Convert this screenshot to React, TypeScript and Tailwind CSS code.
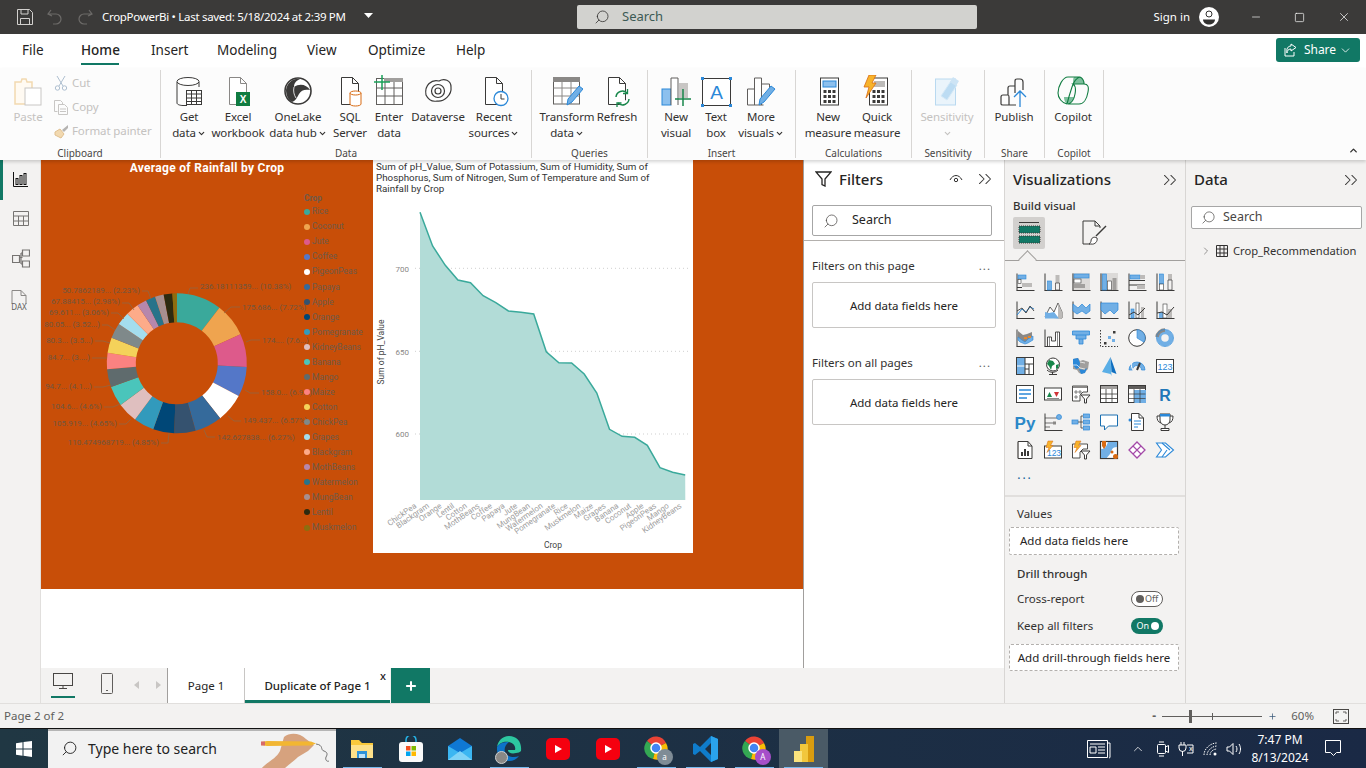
import type { ReactNode } from "react";
import { ChevronDown, ChevronsRight, ChevronRight, Search, Plus, Minus, X, Square } from "lucide-react";

const D = "#3b3a39";
const B = "#71afe5";
const BD = "#2b88d8";
const G = "#bdbbb9";

const Svg = ({ s = 32, children }: { s?: number; children: ReactNode }) => (
  <svg width={s} height={s} viewBox={`0 0 ${s} ${s}`} fill="none">
    {children}
  </svg>
);

// ribbon icons, all on a 32 box
const Doc = ({ c = "#605e5c" }: { c?: string }) => <path d="M7.5 2.5h11l6 6v21h-17z M18.5 2.5v6h6" stroke={c} fill="#fff" />;

const PasteIcon = () => (
  <Svg>
    <path d="M3 7h6l1-3h4l1 3h5v22H3z" stroke="#f2d9b0" fill="#fffaf2" strokeWidth="1.5" />
    <rect x="13" y="13" width="16" height="17" fill="#fff" stroke="#c8c6c4" />
  </Svg>
);
const GetDataIcon = () => (
  <Svg>
    <path d="M4 7v21c0 1.5 3 2.5 6 2.5h4M26 12V7" stroke={D} />
    <ellipse cx="15" cy="6.5" rx="11" ry="4" stroke={D} fill="#fff" />
    <rect x="13.5" y="15.5" width="15" height="14" fill="#fff" stroke={D} />
    <path d="M13.5 19h15M13.5 23h15M13.5 26.5h15M18.5 15.5v14M23.5 15.5v14" stroke={D} />
  </Svg>
);
const ExcelIcon = () => (
  <Svg>
    <Doc c="#8a8886" />
    <rect x="14" y="17" width="14" height="14" fill="#107c41" />
    <text x="21" y="28" fontSize="10" fontWeight="700" fill="#fff" textAnchor="middle" fontFamily="Liberation Sans">X</text>
  </Svg>
);
const OneLakeIcon = () => (
  <Svg>
    <circle cx="16" cy="16" r="13" stroke={D} strokeWidth="1.6" fill="#fff" />
    <path d="M4 15C5 8 11 3 18 4c-4 2-6 4-6 8 6-4 13-2 16 3-5-1-9 0-11 4-2 4-4 7-7 8-4-2-6-7-6-12z" fill={D} />
    <path d="M12 12c-1 4 0 8 2 11" stroke="#fff" strokeWidth=".8" />
  </Svg>
);
const SqlIcon = () => (
  <Svg>
    <Doc c="#3b3a39" />
    <path d="M16 18v11c0 1.2 2.5 2 5.5 2s5.5-.8 5.5-2V18" fill="#fff" stroke="#d86a12" />
    <ellipse cx="21.5" cy="18" rx="5.5" ry="2" fill="#fff" stroke="#d86a12" />
  </Svg>
);
const EnterIcon = () => (
  <Svg>
    <rect x="3.5" y="3.5" width="26" height="26" fill="#fff" stroke="#605e5c" />
    <rect x="11" y="3" width="19" height="4" fill="#a19f9d" />
    <path d="M3.5 13h26M3.5 21h26M12 7v22.5M21 7v22.5" stroke="#605e5c" />
    <path d="M9 0v15M1 7h16" stroke="#18a058" strokeWidth="1.5" />
  </Svg>
);
const DataverseIcon = () => (
  <Svg>
    <path d="M4 20C2 10 10 4 17 6c5-3 12-1 12 6 1 8-7 15-14 14-5 1-9-2-11-6z" stroke={D} strokeWidth="1.2" fill="#fff" />
    <circle cx="16" cy="16" r="6.5" stroke={D} strokeWidth="1.2" />
    <circle cx="16" cy="16" r="3" stroke={D} strokeWidth="1.2" />
  </Svg>
);
const RecentIcon = () => (
  <Svg>
    <Doc c="#3b3a39" />
    <circle cx="23" cy="23.5" r="7" fill="#fff" stroke="#2b88d8" strokeWidth="1.3" />
    <path d="M23 19v5h3.5" stroke={D} />
  </Svg>
);
const Pencil = ({ x = 0 }: { x?: number }) => (
  <g transform={`translate(${x} 0)`}>
    <path d="M16 30l1-6 11-13 4 3-11 13z" fill="#71afe5" stroke="#2b88d8" />
  </g>
);
const TransformIcon = () => (
  <Svg>
    <rect x="2.5" y="3" width="26" height="26" fill="#fff" stroke="#605e5c" />
    <rect x="2" y="2" width="27" height="5" fill="#8a8886" />
    <path d="M2.5 13h26M2.5 21h26M11 7v22M20 7v22" stroke="#8a8886" />
    <Pencil />
  </Svg>
);
const RefreshIcon = () => (
  <Svg>
    <Doc c="#3b3a39" />
    <path d="M15 22a6.5 6.5 0 0 1 11-4M28 24a6.5 6.5 0 0 1-11 4" stroke="#18874b" strokeWidth="1.5" fill="#fff" />
    <path d="M26.5 14v4.5H22M16 32.5V28h4.5" stroke="#18874b" strokeWidth="1.3" />
  </Svg>
);
const NewVisualIcon = () => (
  <Svg>
    <rect x="2" y="14" width="9" height="16" fill="#8cc0ee" stroke="#2b88d8" />
    <path d="M11 30V3h7v27" stroke="#605e5c" fill="#fff" />
    <rect x="19" y="8" width="9" height="15" fill="#c8c6c4" />
    <path d="M23 14v17M15 24h16" stroke="#18874b" strokeWidth="1.5" />
  </Svg>
);
const TextBoxIcon = () => (
  <Svg>
    <rect x="2.5" y="3.5" width="28" height="27" fill="#fff" stroke={D} />
    <text x="16.5" y="24" fontSize="19" fill={BD} textAnchor="middle" fontFamily="Liberation Sans">A</text>
    <path d="M1 2h3v3H1zM29 2h3v3h-3zM1 29h3v3H1zM29 29h3v3h-3z" fill={BD} />
  </Svg>
);
const MoreVisualsIcon = () => (
  <Svg>
    <path d="M2.5 30V14h7M9.5 30V3h7v27M16.5 9h8v6M2.5 30h16" stroke="#605e5c" fill="#fff" />
    <Pencil x={-2} />
  </Svg>
);
const Calc = () => (
  <>
    <rect x="8.5" y="3" width="18" height="27" fill="#fff" stroke={D} />
    {[15, 20, 25].map(y => [11.5, 16, 20.5].map(x => <rect key={`${x}${y}`} x={x} y={y} width="3" height="3" fill={D} />))}
  </>
);
const NewMeasureIcon = () => (
  <Svg>
    <Calc />
    <rect x="11" y="6" width="13" height="6" fill="#8cc0ee" stroke="#2b88d8" />
  </Svg>
);
const QuickMeasureIcon = () => (
  <Svg>
    <Calc />
    <rect x="13" y="6" width="11" height="6" fill="#bdbbb9" />
    <path d="M8 0h7l-4 8h4L5 23l3-11H3z" fill="#f7b32b" stroke="#d86a12" strokeWidth=".8" />
  </Svg>
);
const SensitivityIcon = () => (
  <Svg>
    <rect x="4.5" y="4" width="20" height="26" fill="#eaf4fb" stroke="#b9d9f0" />
    <path d="M10 21l10-15 6 4-10 15z" fill="#bcdcf3" stroke="#d5e9f7" />
    <path d="M22 2l6 4-3 5-6-4z" fill="#cde4f5" />
  </Svg>
);
const PublishIcon = () => (
  <Svg>
    <path d="M3 29v-7q0-2 2-2h5q1 0 1 2M10 20v-7q0-2 2-2h5v-5q0-2 2-2h3q3 0 3 3v8M17 11v7M3 29q0 1 2 1h13M11 22v8" stroke={D} strokeWidth="1.2" />
    <path d="M22 32V16M16 22l6-6 6 6" stroke={BD} strokeWidth="1.3" />
  </Svg>
);
const CopilotIcon = () => (
  <Svg>
    <path d="M17 2h6c2 0 4 3 4 7H16c0-3 0-6 1-7z" fill="#7cbf9c" />
    <path d="M7 22h10c-1 4-3 7-6 7-2 0-4-3-4-7z" fill="#7cbf9c" />
    <path d="M11 2h12c-4 1-6 4-8 10-2 6-4 13-5 17-5-1-9-6-9-11 0-7 5-16 10-16z" stroke="#107c41" strokeWidth="1.1" />
    <path d="M16 9h11c4 0 5 3 4 8-1 6-4 12-9 12H11c4-1 6-4 7-10 1-5 1-8-2-10z" stroke="#107c41" strokeWidth="1.1" />
    <path d="M23 2c2 1 4 3 4 7" stroke="#107c41" strokeWidth="1.1" />
  </Svg>
);

const Chev = () => <ChevronDown className="inline w-[9px] h-[9px] ml-[1px]" strokeWidth={3} />;

function RibbonBtn({ cls, icon, l1, l2, chev, muted }: { cls: string; icon: ReactNode; l1: string; l2?: string; chev?: boolean; muted?: boolean }) {
  return (
    <div className={`flex flex-col items-center shrink-0 ${cls} ${muted ? "text-[#c4c2c0]" : "text-[#323130]"}`}>
      <div className="h-[33px] w-[32px] mb-[1px]">{icon}</div>
      <div className="leading-[16px] whitespace-nowrap">{l1}</div>
      {l2 !== undefined && (
        <div className="leading-[16px] whitespace-nowrap">
          {l2}
          {chev && <Chev />}
        </div>
      )}
    </div>
  );
}

function Group({ cls, label, children }: { cls: string; label: string; children: ReactNode }) {
  return (
    <div className={`shrink-0 h-[88px] border-r border-[#d8d6d4] flex flex-col ${cls}`}>
      <div className="flex flex-1 pt-[5px]">{children}</div>
      <div className="text-center text-[10px] leading-[12px] text-[#484644] mb-[-1px] tracking-normal">{label}</div>
    </div>
  );
}

// visualizations pane glyphs on an 18 box
const Ax = () => <path d="M1 .5v17M.5 17.5h18" stroke={D} />;
const vizIcons: ReactNode[] = [
  <><Ax /><rect x="2" y="2" width="8" height="4" fill={B} stroke={BD} strokeWidth=".6" /><rect x="2" y="6.5" width="3" height="4" fill="#fff" stroke={D} strokeWidth=".6" /><rect x="6" y="10" width="10" height="4" fill={G} /><path d="M1 14.5h5" stroke={D} /></>,
  <><Ax /><rect x="3.5" y="8" width="4" height="9" fill={B} stroke={BD} strokeWidth=".6" /><rect x="11.5" y="2" width="4" height="8" fill={G} /><path d="M11.5 10h4v7h-4z" stroke={D} strokeWidth=".7" /></>,
  <><rect width="18" height="18" fill="#dcdad8" /><Ax /><rect x="2" y="1" width="15" height="4" fill={B} stroke={BD} strokeWidth=".6" /><rect x="2" y="6" width="7" height="4" fill="#fff" stroke={D} strokeWidth=".6" /><rect x="2" y="11" width="11" height="4" fill="#a19f9d" /></>,
  <><rect width="18" height="18" fill="#dcdad8" /><Ax /><rect x="2.5" y="1" width="4" height="16" fill={B} stroke={BD} strokeWidth=".6" /><rect x="7.5" y="8" width="4" height="9" fill="#fff" stroke={D} strokeWidth=".6" /><rect x="12.5" y="5" width="4" height="12" fill="#a19f9d" /></>,
  <><Ax /><rect x="2" y="2" width="10" height="4" fill={B} stroke={BD} strokeWidth=".6" /><rect x="12" y="2" width="5" height="4" fill={G} /><path d="M1 7.5h16M1 12h16" stroke={D} /><rect x="9" y="12" width="8" height="4" fill={G} /></>,
  <><Ax /><rect x="3.5" y="1" width="4" height="10" fill={B} stroke={BD} strokeWidth=".6" /><rect x="3.5" y="11" width="4" height="6" fill="#fff" stroke={D} strokeWidth=".6" /><rect x="12" y="1" width="4" height="6" fill={G} /><path d="M12 7h4v10h-4z" stroke={D} strokeWidth=".7" /></>,
  <><Ax /><path d="M1 14l5-6 4 3 4-5 4 2" stroke={BD} /><path d="M1 10l5-3 4 5 4-7 4 5" stroke={D} strokeWidth=".9" /></>,
  <><path d="M1 16l5-10 4 5 4-9 4 9v6z" fill="#fff" stroke={D} strokeWidth=".8" /><path d="M14 2l4 9v6h-4z" fill={G} /><path d="M1 11l4 1 5-1 5 6.5H1z" fill={B} /></>,
  <><Ax /><path d="M1 3l5 4 4-4 4 4 4-4v7l-4 3-4-3-5 3-4-3z" fill={B} stroke={BD} strokeWidth=".7" /></>,
  <><Ax /><path d="M1 2h17v7l-4 4-4-4-5 4-4-4z" fill={B} stroke={BD} strokeWidth=".7" /></>,
  <><Ax /><rect x="3" y="8" width="3" height="9" fill={B} stroke={BD} strokeWidth=".6" /><rect x="8" y="2" width="3" height="15" fill="#fff" stroke={D} strokeWidth=".6" /><rect x="13" y="6" width="3" height="11" fill={G} /><path d="M1 14l5-3 4 3 7-7" stroke={D} /></>,
  <><Ax /><rect x="3" y="11" width="4" height="6" fill={B} /><rect x="7" y="3" width="4" height="14" fill="#fff" stroke={D} strokeWidth=".6" /><rect x="12" y="8" width="4" height="9" fill={G} /><path d="M1 12l5-1 5 3 7-8" stroke={D} /></>,
  <><Ax /><path d="M2 2l5 4 4-1 5-2v5l-4 3-3 3-3-1-4-3z" fill="#8a8886" /><path d="M2 8l4 3 3 2 3-3 5-3v4l-5 3-3 1-5-2-2-2z" fill={B} stroke={BD} strokeWidth=".6" /><rect x="8" y="8" width="3" height="2" fill="#e8872c" /><rect x="12" y="7" width="3" height="2" fill="#e8872c" /></>,
  <><Ax /><path d="M3.5 17V8h4v4h4V3h4v14" stroke={D} strokeWidth=".9" fill="#fff" /><path d="M5.5 8v9M13.5 3v14" stroke={D} strokeWidth=".6" /></>,
  <><path d="M.5 2h17v4h-3.5v4h-3v5h-4v-5h-3V6H.5z" fill={B} stroke={BD} strokeWidth=".8" /><path d="M4 6h10M7 10h4" stroke={BD} strokeWidth=".8" /></>,
  <><path d="M.5 1v16.5H18" stroke={D} strokeDasharray="1.5 1.5" /><rect x="4" y="13" width="2.5" height="2.5" fill={D} /><rect x="8" y="7" width="3" height="3" fill={B} /><rect x="12" y="10" width="3" height="3" fill={B} /><rect x="13" y="2" width="2.5" height="2.5" fill={D} /></>,
  <><circle cx="9" cy="9" r="8.3" fill="#fff" stroke={D} /><path d="M9 9V.7a8.3 8.3 0 0 1 7 12.5z" fill={B} stroke={BD} strokeWidth=".6" /></>,
  <><circle cx="9" cy="9" r="6" stroke={B} strokeWidth="4.5" /><path d="M9 1a8 8 0 0 0-8 7" stroke="#8a8886" strokeWidth="3.5" /><circle cx="9" cy="9" r="8.5" stroke={BD} strokeWidth=".7" /></>,
  <><rect x=".5" y=".5" width="17" height="17" fill="#fff" stroke={D} /><rect x="1" y="1" width="8" height="16" fill={B} /><path d="M1 9h8" stroke="#fff" /><path d="M9 1v16M9 7h8M13 7v10M9 12h4" stroke={D} /></>,
  <><circle cx="9" cy="7.5" r="6.5" fill="#fff" stroke={D} /><path d="M5 3l4 1 2 3-3 2-1 4-2-4-2-2zM12 8l3-1-1 4-2 1z" fill="#18874b" /><path d="M3 13c3 3 8 3 11 0M8.5 15v2.5M5 17.5h8" stroke={D} /></>,
  <><path d="M1 2l5-1 2 3 3-1 6 2-1 7-3 3-3 2-3-1-2-3-4-1z" fill="#a19f9d" /><path d="M1 2l5-1 2 5-1 5-3 1-3-4z" fill={BD} /><path d="M7 12l5 1 3-2-2 5-4 1z" fill={BD} /><path d="M1 8h4l3 3 5 1M8 5l5 1" stroke="#fff" strokeWidth=".7" /></>,
  <><path d="M10.5 0L2 15l8.5 2 1 2z" fill="#5aaee6" /><path d="M10.5 0l6 17-5-2z" fill="#0f6fc0" /></>,
  <><path d="M1 13a8 8 0 0 1 16 0h-3.5a4.5 4.5 0 0 0-9 0z" fill={B} stroke={BD} strokeWidth=".7" /><path d="M5 13C3 10 3 7 4 6" stroke="#fff" /><path d="M9 13l3-7" stroke={D} strokeWidth="2" /></>,
  <><rect x=".5" y="2.5" width="17" height="13" fill="#fff" stroke={D} /><text x="9" y="12.5" fontSize="9" textAnchor="middle" fill={BD} fontFamily="Liberation Sans">123</text></>,
  <><rect x=".5" y=".5" width="17" height="17" fill="#fff" stroke={D} /><path d="M3 5h12M3 9h12M3 13h8" stroke={BD} strokeWidth="1.5" /></>,
  <><rect x=".5" y="3" width="17" height="12" fill="#fff" stroke={D} /><path d="M3 12l2.5-5L8 12z" fill="#18874b" /><path d="M10 7h5l-2.5 5z" fill="#d13438" /><path d="M3 13.5h12" stroke={D} strokeWidth=".6" /></>,
  <><path d="M.5 1h15v6H11l-3 3v6H.5z" fill="#fff" stroke={D} strokeWidth=".9" /><rect x="1" y="1" width="14" height="2" fill="#8a8886" /><path d="M3 6h2v2H3zM3 11h2v2H3zM7 6h2v2H7z" stroke={D} strokeWidth=".6" /><path d="M9 10h9l-3.5 4v4h-2v-4z" fill="#fff" stroke={D} /></>,
  <><rect x=".5" y=".5" width="17" height="17" fill="#fff" stroke={D} /><rect x="1" y="1" width="16" height="3" fill="#a19f9d" /><path d="M.5 9h17M.5 13.5h17M6 4v14M12 4v14" stroke={D} strokeWidth=".8" /></>,
  <><rect x=".5" y=".5" width="17" height="17" fill="#fff" stroke={D} /><rect x="1" y="1" width="16" height="3" fill="#605e5c" /><rect x="6" y="5" width="12" height="13" fill={B} /><path d="M.5 9h17M.5 13.5h17M6 4v14M12 4v14" stroke={D} strokeWidth=".7" /></>,
  <text x="9" y="16" fontSize="16" fontWeight="700" textAnchor="middle" fill="#2177b8" fontFamily="Liberation Sans">R</text>,
  <text x="9" y="16" fontSize="17" fontWeight="700" textAnchor="middle" fill="#2b88c8" fontFamily="Liberation Sans">Py</text>,
  <><Ax /><path d="M1 5h13M1 10h8M1 14h5" stroke={D} strokeWidth=".7" /><circle cx="15" cy="4" r="2.5" fill={B} stroke={BD} strokeWidth=".7" /><rect x="9" y="8.5" width="3" height="3" fill="#8a8886" /></>,
  <><rect x="0" y="7" width="6" height="4" fill={B} stroke={BD} strokeWidth=".7" /><path d="M6 9h3M9 3v12M9 3h2M9 9h2M9 15h2" stroke={D} strokeWidth=".8" /><rect x="11.5" y="1" width="6" height="4" fill={B} stroke={BD} strokeWidth=".7" /><rect x="11.5" y="7" width="6" height="4" fill={B} stroke={BD} strokeWidth=".7" /><rect x="11.5" y="13" width="6" height="4" fill={B} stroke={BD} strokeWidth=".7" /></>,
  <path d="M.5 2h17v11h-9L4.5 17v-4H.5z" fill="#fff" stroke="#1a6fb0" />,
  <><path d="M3.5.5H11L15.5 5v12.5h-12z" fill="#fff" stroke={D} /><path d="M11 .5V5h4.5" stroke={D} /><circle cx="2" cy="7" r="1.5" fill={BD} /><path d="M6 8h7M6 11h7M6 14h4" stroke={BD} /></>,
  <><path d="M4 1h10v6a5 5 0 0 1-10 0zM4 3H1c0 4 1 6 4 7M14 3h3c0 4-1 6-4 7M9 12v3M5 17.5h8v-2H5z" stroke={D} fill="#fff" /><rect x="4" y="1" width="10" height="2.5" fill={BD} /></>,
  <><path d="M2 .5h10L16 5v12.5H2z" fill="#fff" stroke={D} /><path d="M12 .5V5h4" stroke={D} /><rect x="1" y="1" width="2" height="16" fill="#8a8886" /><rect x="5" y="11" width="2" height="4" fill={D} /><rect x="8" y="8" width="2" height="7" fill={D} /><rect x="11" y="10" width="2" height="5" fill={D} /></>,
  <><rect x=".5" y="5" width="17" height="12" fill="#fff" stroke={D} /><text x="10" y="15" fontSize="8.5" textAnchor="middle" fill={BD} fontFamily="Liberation Sans">123</text><path d="M4 0h5L6.5 4.5H9l-6 7 2-5H2z" fill="#f7b32b" stroke="#d86a12" strokeWidth=".5" /></>,
  <><path d="M.5 3h15v5H11l-3 3v6H.5z" fill="#fff" stroke={D} strokeWidth=".9" /><path d="M9 10h9l-3.5 4v4h-2v-4z" fill="#fff" stroke={D} /><path d="M4 0h5L6.5 4.5H9l-6 7 2-5H2z" fill="#f7b32b" stroke="#d86a12" strokeWidth=".5" /></>,
  <><rect x=".5" y=".5" width="17" height="17" fill="#fff" stroke={D} strokeWidth="1.2" /><path d="M1 8c4 0 5-2 7-7h9v5c-5 0-5 3-6 5-1 3-4 5-4 6H1z" fill={B} /><path d="M2 0h4v5l-2 3-2-3z" fill="#d86a12" /><circle cx="15.5" cy="15.5" r="2.5" fill="#d86a12" /><circle cx="12" cy="11" r="1.5" fill="#d86a12" /></>,
  <><path d="M9 1l8 8-8 8-8-8z" fill="#fff" stroke="#a44aa8" strokeWidth="1.3" /><path d="M5 5l8 8M13 5l-8 8" stroke="#a44aa8" strokeWidth="1.1" /></>,
  <><path d="M.5 2h9l8 7-8 7h-9l5-7z" fill="#fff" stroke={BD} strokeWidth="1.1" /><path d="M6 2l8 7M11 9l-5 7" stroke={BD} strokeWidth="1.1" /></>,
];

const crops: [string, number, string][] = [
  ["Rice", 10.38, "#3aa99b"], ["Coconut", 7.72, "#efa44f"], ["Jute", 7.6, "#dd5a8b"], ["Coffee", 6.9, "#5477c8"],
  ["PigeonPeas", 6.57, "#ffffff"], ["Papaya", 6.27, "#356a9b"], ["Apple", 4.9, "#35526f"], ["Orange", 4.85, "#004777"],
  ["Pomegranate", 4.7, "#329abc"], ["KidneyBeans", 4.65, "#dfbfbf"], ["Banana", 4.6, "#4ac5bb"], ["Mango", 4.16, "#5f6b6d"],
  ["Maize", 3.72, "#fb8281"], ["Cotton", 3.5, "#f4d25a"], ["ChickPea", 3.52, "#7f898a"], ["Grapes", 3.06, "#a4ddee"],
  ["Blackgram", 2.98, "#fdab89"], ["MothBeans", 2.23, "#b687ac"], ["Watermelon", 2.2, "#28738a"], ["MungBean", 2, "#a78f8f"],
  ["Lentil", 2, "#2d2a10"], ["Muskmelon", 1, "#8c6e10"],
];

// page coordinates, the svg viewBox starts at the canvas corner
const donutLabels: [string, number, number, "start" | "end", string][] = [
  ["236.18111359... (10.38%)", 200, 289, "start", "M188 294l2-6h8"],
  ["175.686... (7.72%)", 242, 310, "start", "M224 313l7-6h9"],
  ["174.... (7.6...)", 262, 343, "start", "M246 342l5-2h9"],
  ["158.0... (6.9...)", 261, 395, "start", "M245 390l5 3h9"],
  ["149.437... (6.57%)", 243, 423, "start", "M228 416l6 5h7"],
  ["142.627838... (6.27%)", 217, 440, "start", "M204 430l3 7h8"],
  ["110.474968719... (4.85%)", 159, 445, "end", "M169 433l-1 10h-7"],
  ["105.919... (4.65%)", 117, 426, "end", "M131 419l-5 5h-7"],
  ["104.6... (4.6%)", 102, 409, "end", "M120 404l-7 3h-9"],
  ["94.7... (4.1...)", 92, 389, "end", "M111 385l-8 2h-9"],
  ["84.7... (3....)", 90, 360, "end", "M107 358h-15"],
  ["80.3... (3.5...)", 93, 343, "end", "M110 343l-7-2h-8"],
  ["80.05... (3.52...)", 100, 327, "end", "M115 330l-7-5h-6"],
  ["69.611... (3.06%)", 109, 315, "end", "M124 319l-6-6h-7"],
  ["67.88415... (2.98%)", 120, 304, "end", "M134 310l-5-7h-7"],
  ["50.7862189... (2.23%)", 140, 293, "end", "M151 299l-3-8h-6"],
];

function arc(a0: number, a1: number, R: number, r: number, cx: number, cy: number) {
  const p = (a: number, q: number) => `${(cx + q * Math.sin(a)).toFixed(2)} ${(cy - q * Math.cos(a)).toFixed(2)}`;
  const big = a1 - a0 > Math.PI ? 1 : 0;
  return `M${p(a0, R)}A${R} ${R} 0 ${big} 1 ${p(a1, R)}L${p(a1, r)}A${r} ${r} 0 ${big} 0 ${p(a0, r)}Z`;
}

function Donut() {
  const total = crops.reduce((t, c) => t + c[1], 0);
  let acc = 0;
  return (
    <svg width="263" height="408" viewBox="41 181 263 408" className="overflow-visible">
      {crops.map(c => {
        const a0 = (acc / total) * Math.PI * 2;
        acc += c[1];
        const a1 = (acc / total) * Math.PI * 2;
        return <path key={c[0]} d={arc(a0, a1, 70, 41, 176.8, 363.3)} fill={c[2]} />;
      })}
      {donutLabels.map(l => (
        <g key={l[0]}>
          <path d={l[4]} stroke="#8a6a4c" strokeWidth=".7" fill="none" />
          <text x={l[1]} y={l[2]} fontSize="8" textAnchor={l[3]} fill="#70563f" fontFamily="Roboto">{l[0]}</text>
        </g>
      ))}
    </svg>
  );
}

const xCrops = ["ChickPea", "Blackgram", "Orange", "Lentil", "Cotton", "MothBeans", "Coffee", "Papaya", "Jute", "MungBean", "Watermelon", "Pomegranate", "Rice", "Muskmelon", "Maize", "Grapes", "Banana", "Coconut", "Apple", "PigeonPeas", "Mango", "KidneyBeans"];
const ys = [157, 258, 316, 360, 368, 407, 428, 453, 457, 462, 575, 608, 609, 642, 699, 808, 829, 832, 856, 923, 937, 945];

function AreaChart() {
  const pts = ys.map((y, i) => [420 + i * 12.63, 160 + y / 3]);
  const line = pts.map(p => `${p[0].toFixed(1)},${p[1].toFixed(1)}`).join(" ");
  return (
    <svg width="320" height="358" viewBox="373 195 320 358">
      {[268.3, 351.3, 434].map(y => (
        <path key={y} d={`M415 ${y}H690`} stroke="#cfcfcf" strokeWidth="1" strokeDasharray="1 3" />
      ))}
      {[["700", 271.5], ["650", 354.5], ["600", 437]].map(t => (
        <text key={t[0]} x="409" y={t[1]} fontSize="8" textAnchor="end" fill="#8a8886" fontFamily="Roboto">{t[0]}</text>
      ))}
      <polygon points={`420,500 ${line} 685.3,500`} fill="#b2dcd7" />
      <polyline points={line} fill="none" stroke="#3aa99b" strokeWidth="1.5" />
      <text transform="translate(384 352) rotate(-90)" fontSize="8.5" textAnchor="middle" fill="#444" fontFamily="Roboto">Sum of pH_Value</text>
      {xCrops.map((c, i) => {
        const x = 420 + i * 12.63 - 3;
        return (
          <text key={c} x={x} y="507" fontSize="8" textAnchor="end" fill="#a0a0a0" fontFamily="Roboto" transform={`rotate(-35 ${x} 507)`}>{c}</text>
        );
      })}
      <text x="553" y="548" fontSize="8.5" textAnchor="middle" fill="#444" fontFamily="Roboto">Crop</text>
    </svg>
  );
}

function PaneHead({ title }: { title: string }) {
  return (
    <div className="flex items-center h-[38px] pt-[1px]">
      <span className="text-[15px] font-medium text-[#252423]">{title}</span>
      <ChevronsRight className="ml-auto w-[22px] h-[22px] text-[#3b3a39]" strokeWidth={1.1} />
    </div>
  );
}

const TaskItem = ({ on, cls, children }: { on?: boolean; cls?: string; children: ReactNode }) => (
  <div className={`relative w-[49.1px] h-[40px] flex items-center justify-center shrink-0 ${cls ?? ""}`}>
    {children}
    {on && <div className="absolute bottom-0 left-[5px] right-[5px] h-[2px] bg-[#76b9ed]" />}
  </div>
);

const ChromeIcon = ({ badge, bc }: { badge: string; bc: string }) => (
  <div className="relative w-[26px] h-[26px]">
    <svg width="24" height="24" viewBox="0 0 24 24">
      <path d="M12 12L3 5a11 11 0 0 1 19 2z" fill="#ea4335" />
      <path d="M12 12L3 5a11 11 0 0 0 6 18z" fill="#34a853" />
      <path d="M12 12l10-5a11 11 0 0 1-13 16z" fill="#fbbc05" />
      <circle cx="12" cy="12" r="5" fill="#4285f4" stroke="#fff" strokeWidth="1.5" />
    </svg>
    <div className={`absolute right-[-3px] bottom-[-3px] w-[16px] h-[16px] rounded-full flex items-center justify-center text-[8px] text-white ${bc}`}>{badge}</div>
  </div>
);

const YtIcon = () => (
  <svg width="24" height="22" viewBox="0 0 24 22">
    <rect width="24" height="22" rx="5" fill="#f5000f" />
    <path d="M9 7l7 4-7 4z" fill="#fff" />
  </svg>
);

export default function App() {
  return (
    <div className="w-[1366px] h-[768px] overflow-hidden flex flex-col bg-white text-[11.5px] text-[#252423] font-['Noto_Sans','Open_Sans',sans-serif]">
      {/* title bar */}
      <div className="h-[34px] bg-[#3b3a39] flex items-center text-white shrink-0">
        <svg className="ml-[17px]" width="16" height="16" viewBox="0 0 16 16" fill="none" stroke="#d2d0ce">
          <path d="M.5.5h12l3 3v12H.5zM4 .5V5h7V.5M3.5 15.5v-6h9v6" />
        </svg>
        <svg className="ml-[14px]" width="16" height="16" viewBox="0 0 16 16" fill="none" stroke="#6d6b69" strokeWidth="1.2">
          <path d="M4 1L1 5l4 2M1.5 5H9a5 5 0 0 1 0 10H6" />
        </svg>
        <svg className="ml-[14px]" width="16" height="16" viewBox="0 0 16 16" fill="none" stroke="#6d6b69" strokeWidth="1.2">
          <path d="M12 1l3 4-4 2M14.5 5H7a5 5 0 0 0 0 10h3" />
        </svg>
        <span className="ml-[9px] w-[262px] text-[11.5px] tracking-[-0.3px] whitespace-nowrap">CropPowerBi • Last saved: 5/18/2024 at 2:39 PM</span>
        <svg className="mb-[4px]" width="9" height="5" viewBox="0 0 9 5"><path d="M0 0h9L4.5 5z" fill="#fff" /></svg>
        <div className="ml-[204px] w-[400px] h-[24px] bg-[#d2d2cf] rounded-[2px] flex items-center pl-[17px] text-[#3c5a55] text-[13px]">
          <Search className="w-[16px] h-[16px] text-[#323130] -scale-x-100" strokeWidth={1.2} />
          <span className="ml-[12px]">Search</span>
        </div>
        <span className="ml-auto text-[11.5px]">Sign in</span>
        <svg className="ml-[9px]" width="20" height="20" viewBox="0 0 20 20">
          <circle cx="10" cy="10" r="10" fill="#fff" />
          <circle cx="10" cy="7" r="3" fill="none" stroke="#323130" />
          <path d="M4 12.5h12c0 3-3 5-6 5s-6-2-6-5z" fill="#323130" />
        </svg>
        <Minus className="ml-[31px] w-[12px] h-[12px]" strokeWidth={1.3} />
        <Square className="ml-[32px] w-[11px] h-[11px]" strokeWidth={1.5} />
        <X className="ml-[32px] mr-[15px] w-[14px] h-[14px]" strokeWidth={1.2} />
      </div>

      {/* tabs */}
      <div className="h-[34px] bg-white flex items-center shrink-0 text-[13.5px] text-[#252423] relative pb-[2px]">
        <span className="ml-[22px] w-[59px]">File</span>
        <span className="relative w-[70px] font-medium">
          Home
          <div className="absolute left-0 w-[38px] top-[23px] h-[2px] bg-[#117865]" />
        </span>
        <span className="w-[66px]">Insert</span>
        <span className="w-[90px]">Modeling</span>
        <span className="w-[61px]">View</span>
        <span className="w-[88px]">Optimize</span>
        <span>Help</span>
        <div className="ml-auto mr-[6px] w-[84px] h-[24px] bg-[#117865] rounded-[3px] flex items-center justify-center text-white text-[12px]">
          <svg width="14" height="14" viewBox="0 0 14 14" fill="none" stroke="#fff">
            <path d="M7 1l5 3.5L7 8V6C4 6 3 8 3 10 2 6 4 3 7 3zM1 5v8h9V9" />
          </svg>
          <span className="ml-[6px]">Share</span>
          <ChevronDown className="ml-[3px] w-[13px] h-[13px]" strokeWidth={1.5} />
        </div>
      </div>

      {/* ribbon */}
      <div className="h-[92px] bg-[#fcfcfc] flex items-start pt-[2px] shrink-0 relative z-10 shadow-[0_2px_3px_rgba(0,0,0,0.16)] text-[11.5px] tracking-[-0.1px]">
        <Group cls="w-[161px]" label="Clipboard">
          <RibbonBtn cls="w-[40px] ml-[8px]" icon={<PasteIcon />} l1="Paste" muted />
          <div className="ml-[6px] flex flex-col text-[#c4c2c0]">
            <div className="flex items-center h-[24px] gap-[4px] mt-[-4px]">
              <svg width="14" height="16" viewBox="0 0 14 16" fill="none" stroke="#aebfd0"><path d="M3 1l6 10M11 1L5 11" /><circle cx="3.5" cy="13" r="2.2" /><circle cx="10.5" cy="13" r="2.2" /></svg>
              <span>Cut</span>
            </div>
            <div className="flex items-center h-[24px] gap-[4px]">
              <svg width="14" height="16" viewBox="0 0 14 16" fill="none" stroke="#c8c6c4"><path d="M.5 1.5h6l2 2v2M.5 1.5v11h3M4.5 5.500h6l3 3v7h-9zM6 10h6M6 12.5h6" /></svg>
              <span>Copy</span>
            </div>
            <div className="flex items-center h-[24px] gap-[3px] whitespace-nowrap">
              <svg width="15" height="15" viewBox="0 0 15 15"><path d="M1 8l5-3 4 5-3 4-6-3z" fill="#f2d9b0" stroke="#e0c090" /><path d="M8 6l6-5v3l-4 4z" fill="#b5b3b1" /></svg>
              <span>Format painter</span>
            </div>
          </div>
        </Group>
        <Group cls="w-[371px]" label="Data">
          <RibbonBtn cls="w-[40px] ml-[8px]" icon={<GetDataIcon />} l1="Get" l2="data" chev />
          <RibbonBtn cls="w-[58px]" icon={<ExcelIcon />} l1="Excel" l2="workbook" />
          <RibbonBtn cls="w-[60px] ml-[1px]" icon={<OneLakeIcon />} l1="OneLake" l2="data hub" chev />
          <RibbonBtn cls="w-[40px] ml-[2px]" icon={<SqlIcon />} l1="SQL" l2="Server" />
          <RibbonBtn cls="w-[36px] ml-[1px]" icon={<EnterIcon />} l1="Enter" l2="data" />
          <RibbonBtn cls="w-[60px] ml-[1px]" icon={<DataverseIcon />} l1="Dataverse" />
          <RibbonBtn cls="w-[52px]" icon={<RecentIcon />} l1="Recent" l2="sources" chev />
        </Group>
        <Group cls="w-[116px]" label="Queries">
          <RibbonBtn cls="w-[54px] ml-[8px]" icon={<TransformIcon />} l1="Transform" l2="data" chev />
          <RibbonBtn cls="w-[40px] ml-[3px]" icon={<RefreshIcon />} l1="Refresh" />
        </Group>
        <Group cls="w-[148px]" label="Insert">
          <RibbonBtn cls="w-[34px] ml-[11px]" icon={<NewVisualIcon />} l1="New" l2="visual" />
          <RibbonBtn cls="w-[30px] ml-[8px]" icon={<TextBoxIcon />} l1="Text" l2="box" />
          <RibbonBtn cls="w-[46px] ml-[7px]" icon={<MoreVisualsIcon />} l1="More" l2="visuals" chev />
        </Group>
        <Group cls="w-[116px]" label="Calculations">
          <RibbonBtn cls="w-[48px] ml-[8px]" icon={<NewMeasureIcon />} l1="New" l2="measure" />
          <RibbonBtn cls="w-[48px] ml-[1px]" icon={<QuickMeasureIcon />} l1="Quick" l2="measure" />
        </Group>
        <Group cls="w-[73px]" label="Sensitivity">
          <RibbonBtn cls="w-[60px] ml-[5px]" icon={<SensitivityIcon />} l1="Sensitivity" l2="" chev muted />
        </Group>
        <Group cls="w-[60px]" label="Share">
          <RibbonBtn cls="w-[44px] ml-[7px]" icon={<PublishIcon />} l1="Publish" />
        </Group>
        <Group cls="w-[59px]" label="Copilot">
          <RibbonBtn cls="w-[44px] ml-[6px]" icon={<CopilotIcon />} l1="Copilot" />
        </Group>
        <ChevronDown className="absolute right-[7px] bottom-[4px] w-[11px] h-[11px] rotate-180 text-[#323130]" strokeWidth={3} />
      </div>

      {/* main area */}
      <div className="h-[543px] flex shrink-0 bg-[#f3f2f1] overflow-hidden">
        {/* view rail */}
        <div className="w-[41px] shrink-0 border-r border-[#e1dfdd] flex flex-col items-center relative pt-[12px]">
          <div className="absolute left-0 top-0 w-[3px] h-[40px] bg-[#117865]" />
          <svg className="ml-[1px]" width="15" height="15" viewBox="0 0 15 15" fill="none" stroke="#111">
            <path d="M.5 0v14.5H15" />
            <rect x="3" y="6.5" width="2" height="6" />
            <rect x="7" y="3.5" width="2" height="9" />
            <rect x="11" y="1.5" width="2" height="11" />
          </svg>
          <svg className="mt-[24px] ml-[1px]" width="16" height="15" viewBox="0 0 16 15" fill="none" stroke="#767472">
            <path d="M.5.5h15v14H.5zM.5 5h15M.5 10h15M5.5 5v9.5M10.5 5v9.5" />
          </svg>
          <svg className="mt-[23px] ml-[1px]" width="18" height="19" viewBox="0 0 18 19" fill="none" stroke="#767472" strokeWidth="1.2">
            <path d="M.5 6.5h7v7h-7zM10.5 1h7v6h-7zM10.5 12h7v6h-7zM7.5 8.5h3M9 4v11M9 4h1.5M9 15h1.5" />
          </svg>
          <div className="relative mt-[22px] ml-[-2px] w-[16px] h-[22px]">
            <svg width="16" height="22" viewBox="0 0 16 22" fill="none" stroke="#8a8886"><path d="M1 14V.5h9l5 5V14M10 .5v5h5" /></svg>
            <span className="absolute left-[-4px] bottom-[1px] text-[8px] leading-[9px] text-[#605e5c] w-[24px] text-center">DAX</span>
          </div>
        </div>

        {/* canvas plus filters, with page tabs under them */}
        <div className="w-[963px] shrink-0 flex flex-col">
          <div className="h-[508px] flex shrink-0">
            <div className="w-[762px] shrink-0 bg-white">
              <div className="h-[429px] bg-[#c84e08] flex overflow-hidden font-['Roboto',sans-serif]">
                <div className="w-[332px] shrink-0 flex flex-col">
                  <div className="text-white font-bold text-[12px] leading-[16px] text-center h-[21px] w-[332px] tracking-[0.3px]">Average of Rainfall by Crop</div>
                  <div className="flex">
                    <Donut />
                    <div className="flex flex-col text-[8.5px] text-[#6e5a48] mt-[10px]">
                      <div className="h-[13px] font-bold leading-[15px]">Crop</div>
                      {crops.map(c => (
                        <div key={c[0]} className="h-[15.05px] flex items-center leading-none whitespace-nowrap">
                          <div className="w-[6px] h-[6px] rounded-full mr-[2px]" style={{ backgroundColor: c[2] }} />
                          {c[0]}
                        </div>
                      ))}
                    </div>
                  </div>
                </div>
                <div className="w-[320px] h-[393px] shrink-0 bg-white">
                  <div className="h-[35px] w-[292px] pl-[3px] pt-[1px] text-[9.8px] leading-[11px] text-[#333]">
                    Sum of pH_Value, Sum of Potassium, Sum of Humidity, Sum of Phosphorus, Sum of Nitrogen, Sum of Temperature and Sum of Rainfall by Crop
                  </div>
                  <AreaChart />
                </div>
              </div>
            </div>

            {/* filters */}
            <div className="w-[201px] shrink-0 bg-white border-l border-[#a19f9d] flex flex-col">
              <div className="px-[8px]">
                <div className="flex items-center h-[38px] pl-[3px]">
                  <svg width="17" height="16" viewBox="0 0 17 16" fill="none" stroke="#252423" strokeWidth="1.3"><path d="M1 1h15l-6 7v7l-3-1.5V8z" /></svg>
                  <span className="ml-[7px] text-[15px] font-medium">Filters</span>
                  <svg className="ml-auto" width="14" height="10" viewBox="0 0 14 10" fill="none" stroke="#323130"><path d="M1 6c3-6 9-6 12 0" /><circle cx="7" cy="6" r="1.7" /></svg>
                  <ChevronsRight className="ml-[11px] w-[22px] h-[22px] text-[#3b3a39]" strokeWidth={1.1} />
                </div>
                <div className="mt-[7px] h-[31px] w-[180px] border border-[#a6a6a6] rounded-[2px] flex items-center pl-[10px] text-[12.5px]">
                  <Search className="w-[16px] h-[16px] -scale-x-100 text-[#484644]" strokeWidth={1.1} />
                  <span className="ml-[13px]">Search</span>
                </div>
              </div>
              <div className="mt-[4px] h-px bg-[#b3b0ad]" />
              <div className="px-[8px]">
                <div className="flex justify-between h-[41px] items-center pt-[9px] pr-[5px] text-[#323130]">
                  <span>Filters on this page</span><span className="tracking-[1px] text-[#605e5c] leading-none">...</span>
                </div>
                <div className="h-[46px] w-[184px] border border-[#c8c6c4] rounded-[2px] flex items-center justify-center pt-[1px]">Add data fields here</div>
                <div className="flex justify-between h-[51px] items-center pt-[18px] pr-[5px] text-[#323130]">
                  <span>Filters on all pages</span><span className="tracking-[1px] text-[#605e5c] leading-none">...</span>
                </div>
                <div className="h-[46px] w-[184px] border border-[#c8c6c4] rounded-[2px] flex items-center justify-center pt-[1px]">Add data fields here</div>
              </div>
            </div>
          </div>

          {/* page tabs */}
          <div className="h-[35px] flex shrink-0">
            <div className="w-[127px] shrink-0 flex items-start border-r border-[#a19f9d] relative">
              <div className="ml-[10px] w-[24px] flex flex-col items-center pt-[5px]">
                <svg width="20" height="17" viewBox="0 0 20 17" fill="none" stroke="#484644"><rect x=".5" y=".5" width="19" height="12" /><path d="M10 12.5v3M6 15.5h8" /></svg>
              </div>
              <div className="absolute left-[10px] top-[28px] w-[24px] h-[2px] bg-[#117865]" />
              <svg className="ml-[26px] mt-[5px]" width="12" height="21" viewBox="0 0 12 21" fill="none" stroke="#605e5c"><rect x=".5" y=".5" width="11" height="20" rx="1" /><path d="M5 17.5h2" /></svg>
              <svg className="ml-[21px] mt-[13px]" width="5" height="8" viewBox="0 0 5 8"><path d="M5 0v8L0 4z" fill="#c8c6c4" /></svg>
              <svg className="ml-[17px] mt-[13px]" width="5" height="8" viewBox="0 0 5 8"><path d="M0 0v8l5-4z" fill="#c8c6c4" /></svg>
            </div>
            <div className="w-[77px] bg-white border-r border-[#c8c6c4] flex items-center justify-center">Page 1</div>
            <div className="relative w-[145px] bg-white border-b-[3px] border-[#117865] flex items-center justify-center font-medium">
              <span className="mt-[3px]">Duplicate of Page 1</span>
              <span className="absolute right-[4px] top-[1px] text-[11px] leading-[14px]">x</span>
            </div>
            <div className="ml-px w-[39px] bg-[#117865] flex items-center justify-center">
              <Plus className="w-[14px] h-[14px] text-white" strokeWidth={3.5} />
            </div>
          </div>
        </div>

        {/* visualizations */}
        <div className="w-[181px] shrink-0 border-l border-[#d8d6d4] flex flex-col">
          <div className="px-[8px] pr-[4px]">
            <PaneHead title="Visualizations" />
            <div className="font-medium text-[#323130] leading-[16px]">Build visual</div>
          </div>
          <div className="flex ml-[8px] mt-[3px] h-[32px]">
            <div className="w-[32px] h-[32px] bg-[#d2d0ce] rounded-[2px] flex items-center justify-center">
              <svg width="26" height="26" viewBox="0 0 26 26" fill="none">
                <path d="M3 2.5h20" stroke={D} />
                <rect x="3" y="6" width="21" height="7" fill="#117865" stroke={D} strokeDasharray="1 1" />
                <rect x="3" y="16" width="21" height="7" fill="#117865" stroke={D} strokeDasharray="1 1" />
              </svg>
            </div>
            <svg className="ml-[37px] mt-[3px]" width="26" height="26" viewBox="0 0 26 26" fill="none" stroke={D}>
              <path d="M1 1h12l5 5v2M13 1v5h5M1 1v23h7" />
              <path d="M24 6L14 16" strokeWidth="1.5" />
              <path d="M9 24c4 1 7-3 6-6-3-2-6 0-6 3 0 1-1 2-2 3z" fill="#fff" />
            </svg>
          </div>
          <div className="relative mt-[11px] h-px bg-[#a19f9d] shrink-0">
            <div className="absolute left-[16px] -top-[7px] w-[13px] h-[13px] rotate-45 bg-[#f3f2f1] border-l border-t border-[#a19f9d]" />
          </div>
          <div className="grid grid-cols-[repeat(6,28px)] auto-rows-[28px] ml-[6px] mt-[7px] place-items-center">
            {vizIcons.map((ic, i) => (
              <svg key={i} width="18" height="18" viewBox="0 0 18 18" fill="none" className="overflow-visible">{ic}</svg>
            ))}
            <div className="col-start-1 text-[#0f5e99] text-[12px] leading-[8px] tracking-[2px] pb-[6px]">...</div>
          </div>
          <div className="mt-[3px] h-[2px] bg-[#e1dfdd]" />
          <div className="px-[4px] text-[#323130]">
            <div className="pl-[8px] h-[16px] leading-[16px] mt-[9px]">Values</div>
            <div className="mt-[5px] w-[170px] h-[28px] bg-white border border-dashed border-[#b3b0ad] rounded-[2px] flex items-center pl-[10px] text-[#252423]">Add data fields here</div>
            <div className="pl-[8px] mt-[11px] h-[16px] leading-[16px] font-medium">Drill through</div>
            <div className="pl-[8px] pr-[18px] mt-[9px] h-[16px] flex items-center justify-between">
              <span>Cross-report</span>
              <div className="w-[32px] h-[16px] rounded-full border border-[#605e5c] bg-white flex items-center pl-[4px] text-[9px] text-[#605e5c]">
                <div className="w-[8px] h-[8px] rounded-full bg-[#605e5c] mr-[1px]" />Off
              </div>
            </div>
            <div className="pl-[8px] pr-[18px] mt-[11px] h-[16px] flex items-center justify-between">
              <span>Keep all filters</span>
              <div className="w-[32px] h-[16px] rounded-full bg-[#117865] flex items-center justify-end pr-[4px] text-[9px] text-white">
                On<div className="w-[8px] h-[8px] rounded-full bg-white ml-[2px]" />
              </div>
            </div>
            <div className="mt-[10px] w-[170px] h-[27px] bg-white border border-dashed border-[#b3b0ad] rounded-[2px] flex items-center justify-center text-[#252423] whitespace-nowrap">Add drill-through fields here</div>
          </div>
        </div>

        {/* data pane */}
        <div className="flex-1 border-l border-[#d8d6d4] flex flex-col px-[5px]">
          <div className="pl-[3px]"><PaneHead title="Data" /></div>
          <div className="mt-[8px] h-[23px] w-[171px] bg-white border border-[#a6a6a6] rounded-[2px] flex items-center pl-[9px] text-[12.5px] text-[#484644]">
            <Search className="w-[15px] h-[15px] -scale-x-100" strokeWidth={1.1} />
            <span className="ml-[7px]">Search</span>
          </div>
          <div className="mt-[13px] flex items-center h-[18px] pl-[9px] whitespace-nowrap text-[#323130] text-[11.2px]">
            <ChevronRight className="w-[12px] h-[12px] text-[#605e5c]" strokeWidth={1.3} />
            <svg className="ml-[4px]" width="12" height="12" viewBox="0 0 12 12" fill="none" stroke="#323130"><path d="M.5.5h11v11H.5zM.5 4h11M.5 8h11M4 .5v11M8 .5v11" /></svg>
            <span className="ml-[5px]">Crop_Recommendation</span>
          </div>
        </div>
      </div>

      {/* status bar */}
      <div className="h-[25px] bg-[#f3f2f1] border-t border-[#e1dfdd] flex items-center shrink-0 text-[#605e5c] text-[11.5px]">
        <span className="ml-[4px]">Page 2 of 2</span>
        <div className="ml-auto flex items-center mr-[17px]">
          <span className="w-[7px] text-[12px] font-bold">-</span>
          <div className="relative ml-[3px] w-[100px] h-px bg-[#605e5c]">
            <div className="absolute left-[27px] -top-[6px] w-[3px] h-[13px] bg-[#605e5c]" />
            <div className="absolute left-[50px] -top-[3px] w-px h-[7px] bg-[#605e5c]" />
          </div>
          <Plus className="ml-[6px] w-[9px] h-[9px] text-[#3b5a7a]" strokeWidth={2} />
          <span className="ml-[14px]">60%</span>
          <svg className="ml-[19px]" width="16" height="15" viewBox="0 0 16 15" fill="none" stroke="#484644">
            <rect x=".5" y=".5" width="15" height="14" />
            <path d="M3 5V3h3M10 3h3v2M3 10v2h3M10 12h3v-2" stroke="#605e5c" />
          </svg>
        </div>
      </div>

      {/* windows taskbar */}
      <div className="h-[40px] flex items-center shrink-0 bg-gradient-to-r from-[#203743] to-[#1a2945] text-white border-t border-[#111]">
        <div className="w-[48px] flex justify-center">
          <svg width="16" height="16" viewBox="0 0 16 16"><path d="M0 2.2l6.5-1v6.3H0zM7.5 1L16 0v7.5H7.5zM0 8.500h6.5v6.3l-6.5-1zM7.500 8.500H16V16l-8.500-1.200z" fill="#fff" /></svg>
        </div>
        <div className="w-[288px] h-[40px] bg-[#f2f2f2] border-t-2 border-[#b5b5b5] flex items-center text-[#222] text-[14px] relative overflow-hidden pb-[3px]">
          <Search className="ml-[13px] w-[17px] h-[17px] -scale-x-100" strokeWidth={1.3} />
          <span className="ml-[10px]">Type here to search</span>
          <svg className="absolute left-[210px] top-0" width="78" height="40" viewBox="0 0 78 40" fill="none">
            <path d="M3 38C10 30 18 28 22 20L26 6C32 1 42 2 48 8L56 14 50 20 40 26C36 30 30 34 26 38Z" fill="#d6a27e" />
            <path d="M3 11l6-1 44 .5 5 2-5 2-44 .5-6-1z" fill="#f2b632" />
            <rect x="3" y="10.5" width="4" height="4" fill="#d86a6a" />
            <path d="M58 13c8 1 4 6 8 7 3 1 4 3 2 6-1 3 1 5 3 4" stroke="#555" strokeWidth=".8" />
          </svg>
        </div>
        <div className="w-[1.5px] shrink-0" />
        <TaskItem on>
          <svg width="24" height="22" viewBox="0 0 24 22">
            <path d="M1 2h8l3 3h11v15H1z" fill="#f9c93c" />
            <path d="M1 7h22v13H1z" fill="#fde18a" />
            <rect x="7" y="13" width="10" height="7" fill="#2e93d9" />
            <rect x="9" y="16" width="6" height="4" fill="#bfe3f8" />
          </svg>
        </TaskItem>
        <TaskItem>
          <svg width="24" height="26" viewBox="0 0 24 26">
            <path d="M7 7V4a5 5 0 0 1 10 0v3" stroke="#25b4e8" fill="none" strokeWidth="1.5" />
            <rect x="0" y="6" width="24" height="20" rx="3" fill="#fafafa" />
            <rect x="7" y="10" width="4.5" height="4.5" fill="#f25022" />
            <rect x="12.5" y="10" width="4.5" height="4.5" fill="#7fba00" />
            <rect x="7" y="15.5" width="4.5" height="4.5" fill="#00a4ef" />
            <rect x="12.5" y="15.5" width="4.5" height="4.5" fill="#ffb900" />
          </svg>
        </TaskItem>
        <TaskItem>
          <svg width="24" height="22" viewBox="0 0 24 22">
            <path d="M0 8l12-8 12 8v14H0z" fill="#0f78d4" />
            <path d="M0 8l12 7 12-7v14H0z" fill="#3bb6f2" />
            <path d="M0 22l12-9 12 9z" fill="#7fd3f7" />
          </svg>
        </TaskItem>
        <TaskItem on>
          <div className="relative">
            <svg width="25" height="25" viewBox="0 0 25 25">
              <path d="M12 0C5 0 1 5 0 11c3-5 8-6 12-5 5 1 7 5 6 8h-7c0 3 4 4 8 3 2 0 4-1 5-2 1-9-4-15-12-15z" fill="#2dc7a0" />
              <path d="M0 11c-1 8 5 14 12 14 4 0 8-2 10-5-5 2-12 1-14-4-1-3 0-7 4-10C7 6 2 7 0 11z" fill="#0d73c8" />
            </svg>
            <div className="absolute left-[-2px] bottom-[-3px] w-[13px] h-[13px] rounded-full bg-[#8a8886] border border-[#cfcfcf]" />
          </div>
        </TaskItem>
        <TaskItem><YtIcon /></TaskItem>
        <TaskItem><YtIcon /></TaskItem>
        <TaskItem on><ChromeIcon badge="a" bc="bg-[#7f8c96]" /></TaskItem>
        <TaskItem on>
          <svg width="25" height="26" viewBox="0 0 25 26">
            <path d="M18 0l7 3v20l-7 3-11-11-5 4-2-1V8l2-1 5 4zM18 7l-6 6 6 6z" fill="#0f7ccb" />
            <path d="M18 0l7 3v20l-7 3z" fill="#2aa3ec" />
          </svg>
        </TaskItem>
        <TaskItem on><ChromeIcon badge="A" bc="bg-[#a64fc9]" /></TaskItem>
        <TaskItem on cls="bg-[#4a5a66]">
          <svg width="20" height="26" viewBox="0 0 20 26">
            <rect x="12" y="0" width="8" height="26" fill="#d99c0f" />
            <rect x="6" y="8" width="8" height="18" fill="#f2c73c" />
            <rect x="0" y="15" width="8" height="11" fill="#fae37d" />
          </svg>
        </TaskItem>
        <div className="ml-auto flex items-center h-full">
          <svg width="24" height="20" viewBox="0 0 24 20" fill="none" stroke="#fff" className="mr-[20px]">
            <path d="M.5 1.5h20v17H.5zM21 4h2v14a1 1 0 0 1-1 1" />
            <path d="M3 5h15M3 8h6v6H3zM11 8h7M11 11h7M11 14h7" />
          </svg>
          <ChevronDown className="w-[14px] h-[14px] rotate-180 mr-[12px]" strokeWidth={1.3} />
          <svg width="12" height="16" viewBox="0 0 12 16" fill="none" stroke="#fff" className="mr-[9px]"><rect x=".5" y="3.5" width="8" height="9" rx="1" /><path d="M8.5 6l3-1.5v7l-3-1.5M2 1h5M2 15h5" /></svg>
          <svg width="16" height="16" viewBox="0 0 16 16" fill="none" stroke="#fff" className="mr-[9px]"><path d="M3 1v3M6 1v3M1 4h7v3a3 3 0 0 1-7 0zM4.5 10v5M9 4h6v8H9" /><text x="11" y="10" fontSize="7" fill="#fff" stroke="none">x</text></svg>
          <svg width="16" height="14" viewBox="0 0 16 14" fill="none" stroke="#fff" className="mr-[7px]"><path d="M1 13C1 7 7 1 14 1M4 13c0-4 5-9 10-9M7 13c0-3 3-6 7-6" strokeDasharray="1.5 1" /><circle cx="12" cy="12" r="1.5" fill="#fff" stroke="none" /></svg>
          <svg width="16" height="14" viewBox="0 0 16 14" fill="none" stroke="#fff" className="mr-[9px]"><path d="M1 5h2.5L7 1.5v11L3.5 9H1zM10 4c1.3 2 1.3 4 0 6M13 2c2 3 2 7 0 10" /></svg>
          <div className="w-[58px] text-center text-[12px] leading-[18px] mr-[16px]">
            <div>7:47 PM</div>
            <div>8/13/2024</div>
          </div>
          <svg width="16" height="17" viewBox="0 0 16 17" fill="none" stroke="#fff" className="mr-[25px]"><path d="M.5.5h15v12h-4l-3 3-3-3H.5z" /></svg>
        </div>
      </div>
    </div>
  );
}
